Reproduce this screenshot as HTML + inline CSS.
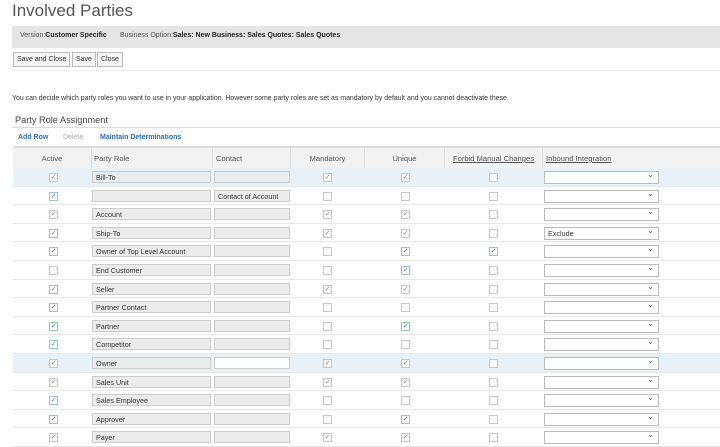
<!DOCTYPE html><html><head><style>
body{margin:0;width:720px;height:447px;overflow:hidden;background:#fff;font-family:"Liberation Sans",sans-serif;position:relative;color:#333}
.a{position:absolute}
h1{position:absolute;left:12px;top:1px;margin:0;font-weight:normal;font-size:17px;color:#555}
.bar{left:12px;top:26px;width:708px;height:22px;background:#e5e5e5;font-size:7px;color:#555}
.bar b{color:#222}
.btn{top:52px;height:13px;border:1px solid #bbb;background:#f5f5f5;font-size:7px;line-height:13px;padding:0 3px;color:#333}
.row{position:absolute;left:13px;width:707px;height:18.6px;border-bottom:1px solid #e8e8e8;box-sizing:border-box}
.hl{background:#e8f0f8}
.cb{position:absolute;top:5px;width:7px;height:7px;border:1px solid #c8c8c8;background:#fafafa;font-size:7px;line-height:7px;text-align:center;color:#888}
.cb.b{color:#3a8bd0;border-color:#9bc0e0}
.in{position:absolute;top:3px;height:12px;border:1px solid #ccc;background:#ececec;font-size:7.2px;line-height:12px;padding-left:3px;box-sizing:border-box;color:#333;white-space:nowrap}
.sel{position:absolute;left:531px;top:3px;width:115px;height:13px;border:1px solid #bbb;background:#fff;box-sizing:border-box;font-size:7.2px;line-height:11px;padding-left:3px}
.sel:after{content:"⌄";position:absolute;right:4px;top:-3px;font-size:8px;color:#555}
.th{position:absolute;top:0;height:22px;line-height:22px;font-size:7.6px;color:#555;border-right:1px solid #ddd;box-sizing:border-box;white-space:nowrap}
</style></head><body>
<h1>Involved Parties</h1>
<div class="a bar"><span class="a" style="left:8px;top:6px">Version:<b>Customer Specific</b></span><span class="a" style="left:108px;top:6px">Business Option:<b>Sales: New Business: Sales Quotes: Sales Quotes</b></span></div>
<div class="a btn" style="left:13px">Save and Close</div><div class="a btn" style="left:72px">Save</div><div class="a btn" style="left:97px">Close</div>
<div class="a" style="left:12px;top:70px;width:708px;border-top:1px solid #eee"></div>
<div class="a" style="left:12px;top:95px;font-size:6.95px;color:#333;white-space:nowrap">You can decide which party roles you want to use in your application. However some party roles are set as mandatory by default and you cannot deactivate these.</div>
<div class="a" style="left:15px;top:115px;font-size:9.2px;color:#444">Party Role Assignment</div>
<div class="a" style="left:12px;top:127px;width:708px;border-top:1px solid #ddd"></div>
<div class="a" style="left:18px;top:134px;font-size:7px;font-weight:bold;color:#2a6db5">Add Row</div>
<div class="a" style="left:63px;top:134px;font-size:7px;color:#aaa">Delete</div>
<div class="a" style="left:100px;top:134px;font-size:7px;font-weight:bold;color:#2a6db5">Maintain Determinations</div>
<div class="a" style="left:13px;top:146px;width:707px;height:22px;background:#f2f2f2;border-top:2px solid #ddd;box-sizing:border-box">
<div class="th" style="left:0;width:79px;text-align:center">Active</div>
<div class="th" style="left:79px;width:121px;padding-left:2px">Party Role</div>
<div class="th" style="left:200px;width:78px;padding-left:3px">Contact</div>
<div class="th" style="left:278px;width:74px;text-align:center">Mandatory</div>
<div class="th" style="left:352px;width:80px;text-align:center">Unique</div>
<div class="th" style="left:432px;width:98px;text-align:center;text-decoration:underline">Forbid Manual Changes</div>
<div class="th" style="left:530px;width:120px;padding-left:3px;text-decoration:underline;border:0">Inbound Integration</div>
</div>
<div class="row hl" style="top:168px"><div class="cb" style="left:36px">✓</div><div class="in" style="left:79px;width:119px">Bill-To</div><div class="in" style="left:201px;width:76px"></div><div class="cb" style="left:310px">✓</div><div class="cb" style="left:388px">✓</div><div class="cb" style="left:476px"></div><div class="sel"></div></div>
<div class="row" style="top:186.6px"><div class="cb b" style="left:36px">✓</div><div class="in" style="left:79px;width:119px"></div><div class="in" style="left:201px;width:76px">Contact of Account</div><div class="cb" style="left:310px"></div><div class="cb" style="left:388px"></div><div class="cb" style="left:476px"></div><div class="sel"></div></div>
<div class="row" style="top:205.2px"><div class="cb" style="left:36px">✓</div><div class="in" style="left:79px;width:119px">Account</div><div class="in" style="left:201px;width:76px"></div><div class="cb" style="left:310px">✓</div><div class="cb" style="left:388px">✓</div><div class="cb" style="left:476px"></div><div class="sel"></div></div>
<div class="row" style="top:223.8px"><div class="cb b" style="left:36px">✓</div><div class="in" style="left:79px;width:119px">Ship-To</div><div class="in" style="left:201px;width:76px"></div><div class="cb" style="left:310px">✓</div><div class="cb" style="left:388px">✓</div><div class="cb" style="left:476px"></div><div class="sel">Exclude</div></div>
<div class="row" style="top:242.4px"><div class="cb b" style="left:36px">✓</div><div class="in" style="left:79px;width:119px">Owner of Top Level Account</div><div class="in" style="left:201px;width:76px"></div><div class="cb" style="left:310px"></div><div class="cb b" style="left:388px">✓</div><div class="cb b" style="left:476px">✓</div><div class="sel"></div></div>
<div class="row" style="top:261px"><div class="cb" style="left:36px"></div><div class="in" style="left:79px;width:119px">End Customer</div><div class="in" style="left:201px;width:76px"></div><div class="cb" style="left:310px"></div><div class="cb b" style="left:388px">✓</div><div class="cb" style="left:476px"></div><div class="sel"></div></div>
<div class="row" style="top:279.6px"><div class="cb b" style="left:36px">✓</div><div class="in" style="left:79px;width:119px">Seller</div><div class="in" style="left:201px;width:76px"></div><div class="cb" style="left:310px">✓</div><div class="cb" style="left:388px">✓</div><div class="cb" style="left:476px"></div><div class="sel"></div></div>
<div class="row" style="top:298.2px"><div class="cb b" style="left:36px">✓</div><div class="in" style="left:79px;width:119px">Partner Contact</div><div class="in" style="left:201px;width:76px"></div><div class="cb" style="left:310px"></div><div class="cb" style="left:388px"></div><div class="cb" style="left:476px"></div><div class="sel"></div></div>
<div class="row" style="top:316.8px"><div class="cb b" style="left:36px">✓</div><div class="in" style="left:79px;width:119px">Partner</div><div class="in" style="left:201px;width:76px"></div><div class="cb" style="left:310px"></div><div class="cb b" style="left:388px">✓</div><div class="cb" style="left:476px"></div><div class="sel"></div></div>
<div class="row" style="top:335.4px"><div class="cb b" style="left:36px">✓</div><div class="in" style="left:79px;width:119px">Competitor</div><div class="in" style="left:201px;width:76px"></div><div class="cb" style="left:310px"></div><div class="cb" style="left:388px"></div><div class="cb" style="left:476px"></div><div class="sel"></div></div>
<div class="row hl" style="top:354px"><div class="cb" style="left:36px">✓</div><div class="in" style="left:79px;width:119px">Owner</div><div class="in" style="left:201px;width:76px;background:#fff"></div><div class="cb" style="left:310px">✓</div><div class="cb" style="left:388px">✓</div><div class="cb" style="left:476px"></div><div class="sel"></div></div>
<div class="row" style="top:372.6px"><div class="cb" style="left:36px">✓</div><div class="in" style="left:79px;width:119px">Sales Unit</div><div class="in" style="left:201px;width:76px"></div><div class="cb" style="left:310px">✓</div><div class="cb" style="left:388px">✓</div><div class="cb" style="left:476px"></div><div class="sel"></div></div>
<div class="row" style="top:391.2px"><div class="cb b" style="left:36px">✓</div><div class="in" style="left:79px;width:119px">Sales Employee</div><div class="in" style="left:201px;width:76px"></div><div class="cb" style="left:310px"></div><div class="cb" style="left:388px"></div><div class="cb" style="left:476px"></div><div class="sel"></div></div>
<div class="row" style="top:409.8px"><div class="cb b" style="left:36px">✓</div><div class="in" style="left:79px;width:119px">Approver</div><div class="in" style="left:201px;width:76px"></div><div class="cb" style="left:310px"></div><div class="cb b" style="left:388px">✓</div><div class="cb" style="left:476px"></div><div class="sel"></div></div>
<div class="row" style="top:428.4px"><div class="cb" style="left:36px">✓</div><div class="in" style="left:79px;width:119px">Payer</div><div class="in" style="left:201px;width:76px"></div><div class="cb" style="left:310px">✓</div><div class="cb" style="left:388px">✓</div><div class="cb" style="left:476px"></div><div class="sel"></div></div>
</body></html>
